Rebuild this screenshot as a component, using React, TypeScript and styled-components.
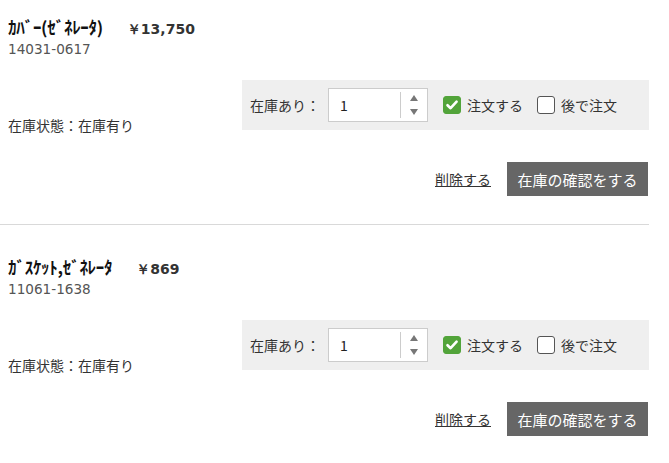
import React from "react";
import styled, { createGlobalStyle } from "styled-components";

const GlobalStyle = createGlobalStyle`
  body {
    margin: 0;
    background: #fff;
    color: #333;
    font-family: "Noto Sans CJK JP", "Noto Sans", sans-serif;
  }
`;

type CartItem = {
  name: string;
  price: string;
  partNo: string;
  qty: number;
};

const items: CartItem[] = [
  { name: "ｶﾊﾞｰ(ｾﾞﾈﾚｰﾀ)", price: "￥13,750", partNo: "14031-0617", qty: 1 },
  { name: "ｶﾞｽｹｯﾄ,ｾﾞﾈﾚｰﾀ", price: "￥869", partNo: "11061-1638", qty: 1 },
];

function Spinner() {
  return (
    <SpinBox>
      <svg width="10" height="26" viewBox="0 0 10 26">
        <path d="M5 3 L9 9 L1 9 Z" fill="#777" />
        <path d="M1 17 L9 17 L5 23 Z" fill="#777" />
      </svg>
    </SpinBox>
  );
}

function Check({ checked, label }: { checked: boolean; label: string }) {
  return (
    <CheckLabel>
      <Box $checked={checked}>
        {checked && (
          <svg width="14" height="14" viewBox="0 0 14 14">
            <path d="M2.5 7.2 L5.6 10.2 L11.6 3.6" stroke="#fff" strokeWidth="2.6" fill="none" strokeLinecap="round" strokeLinejoin="round" />
          </svg>
        )}
      </Box>
      {label}
    </CheckLabel>
  );
}

function Item({ item }: { item: CartItem }) {
  return (
    <ItemWrap>
      <Head>
        <Name>{item.name}</Name>
        <Price>{item.price}</Price>
      </Head>
      <PartNo>{item.partNo}</PartNo>
      <Row>
        <Status>在庫状態：在庫有り</Status>
        <Panel>
          <PanelLabel>在庫あり：</PanelLabel>
          <QtyBox>
            <QtyValue>{item.qty}</QtyValue>
            <Spinner />
          </QtyBox>
          <Checks>
            <Check checked label="注文する" />
            <Check checked={false} label="後で注文" />
          </Checks>
        </Panel>
      </Row>
      <Actions>
        <DeleteLink href="#">削除する</DeleteLink>
        <StockButton>在庫の確認をする</StockButton>
      </Actions>
    </ItemWrap>
  );
}

export default function App() {
  return (
    <>
      <GlobalStyle />
      <List>
        {items.map((it) => (
          <Item key={it.partNo} item={it} />
        ))}
      </List>
    </>
  );
}

const List = styled.div`
  width: 649px;
`;

const ItemWrap = styled.div`
  padding: 29px 0 28px;
  border-bottom: 1px solid #d9d9d9;
  &:first-child {
    padding-top: 14px;
  }
`;

const Head = styled.div`
  display: flex;
  align-items: baseline;
  padding-left: 8px;
  height: 22px;
`;

const Name = styled.span`
  font-size: 17px;
  font-weight: 700;
  color: #111;
  letter-spacing: -0.3px;
`;

const Price = styled.span`
  margin-left: 24px;
  font-family: "DejaVu Sans", sans-serif;
  font-size: 14px;
  font-weight: 700;
  color: #333;
`;

const PartNo = styled.div`
  margin-top: 3px;
  padding-left: 8px;
  font-family: "DejaVu Sans", sans-serif;
  font-size: 13.6px;
  line-height: 20px;
  color: #555;
`;

const Row = styled.div`
  display: flex;
  justify-content: space-between;
  align-items: flex-end;
  margin-top: 21px;
`;

const Status = styled.div`
  padding-left: 8px;
  font-size: 14px;
  line-height: 20px;
  margin-bottom: -5px;
`;

const Panel = styled.div`
  width: 399px;
  height: 50px;
  padding-left: 8px;
  background: #efefef;
  display: flex;
  align-items: center;
`;

const PanelLabel = styled.span`
  font-size: 14px;
  width: 78px;
`;

const QtyBox = styled.div`
  width: 98px;
  height: 32px;
  background: #fff;
  border: 1px solid #ccc;
  display: flex;
  align-items: center;
`;

const QtyValue = styled.span`
  flex: 1;
  padding-left: 11px;
  font-size: 14px;
  color: #222;
`;

const SpinBox = styled.div`
  width: 26px;
  height: 26px;
  border-left: 1px solid #ccc;
  display: flex;
  align-items: center;
  justify-content: center;
`;

const Checks = styled.div`
  display: flex;
  align-items: center;
  gap: 14px;
  margin-left: 15px;
`;

const CheckLabel = styled.label`
  display: flex;
  align-items: center;
  gap: 6px;
  font-size: 14px;
  color: #333;
`;

const Box = styled.span<{ $checked: boolean }>`
  width: 18px;
  height: 18px;
  box-sizing: border-box;
  border-radius: 3px;
  display: flex;
  align-items: center;
  justify-content: center;
  background: ${(p) => (p.$checked ? "#52a43a" : "#fff")};
  border: 1px solid ${(p) => (p.$checked ? "#52a43a" : "#555")};
`;

const Actions = styled.div`
  display: flex;
  justify-content: flex-end;
  align-items: center;
  gap: 16px;
  margin-top: 32px;
  padding-right: 1px;
`;

const DeleteLink = styled.a`
  font-size: 14px;
  color: #333;
  text-decoration: underline;
`;

const StockButton = styled.button`
  width: 141px;
  height: 34px;
  border: none;
  background: #666;
  color: #fff;
  font-family: "Noto Sans CJK JP", sans-serif;
  font-size: 15px;
  padding: 0;
`;
